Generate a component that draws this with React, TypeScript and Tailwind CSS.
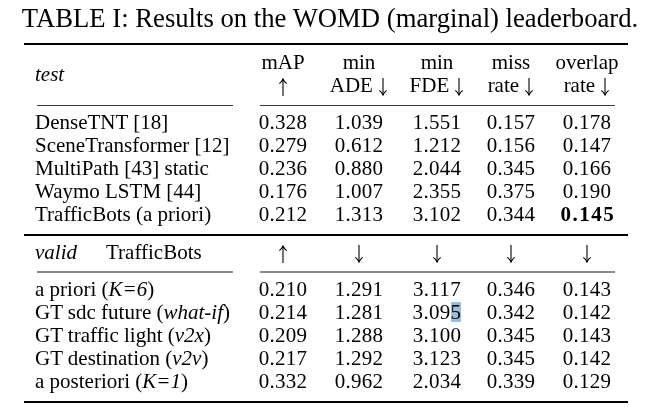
import React from 'react';

type Cell = React.ReactNode;

const cols = 'grid grid-cols-[222px_74px_78px_78px_70px_82px]';

// thin math-style arrows, drawn as svg
const Up = () => (
  <svg width="10" height="18" viewBox="0 0 10 18" className="inline-block align-[-4px]" fill="none" stroke="black" strokeWidth="1.1">
    <path d="M5 1.2 V18" />
    <path d="M1.3 5.6 Q3.8 3.9 5 1 Q6.2 3.9 8.7 5.6" />
  </svg>
);
const Down = () => (
  <svg width="10" height="18" viewBox="0 0 10 18" className="inline-block align-[-4px]" fill="none" stroke="black" strokeWidth="1.1">
    <path d="M5 0 V16.8" />
    <path d="M1.3 12.4 Q3.8 14.1 5 17 Q6.2 14.1 8.7 12.4" />
  </svg>
);

const testRows: Cell[][] = [
  ['DenseTNT [18]', '0.328', '1.039', '1.551', '0.157', '0.178'],
  ['SceneTransformer [12]', '0.279', '0.612', '1.212', '0.156', '0.147'],
  ['MultiPath [43] static', '0.236', '0.880', '2.044', '0.345', '0.166'],
  ['Waymo LSTM [44]', '0.176', '1.007', '2.355', '0.375', '0.190'],
  ['TrafficBots (a priori)', '0.212', '1.313', '3.102', '0.344', <b key="b" className="tracking-[1.5px] pl-[1.5px]">0.145</b>],
];

const validRows: Cell[][] = [
  [<>a priori (<i>K=6</i>)</>, '0.210', '1.291', '3.117', '0.346', '0.143'],
  [
    <>GT sdc future (<i>what-if</i>)</>,
    '0.214',
    '1.281',
    <>
      3.09
      <span className="relative">
        5
        <span className="absolute left-0 right-0 top-[2px] h-[20px] bg-[#9cbfdb] mix-blend-multiply" />
      </span>
    </>,
    '0.342',
    '0.142',
  ],
  [<>GT traffic light (<i>v2x</i>)</>, '0.209', '1.288', '3.100', '0.345', '0.143'],
  [<>GT destination (<i>v2v</i>)</>, '0.217', '1.292', '3.123', '0.345', '0.142'],
  [<>a posteriori (<i>K=1</i>)</>, '0.332', '0.962', '2.034', '0.339', '0.129'],
];

const Row: React.FC<{ cells: Cell[] }> = ({ cells }) => (
  <div className={`${cols} h-[23px] leading-[23px]`}>
    <div className="pl-[11px] whitespace-nowrap">{cells[0]}</div>
    {cells.slice(1).map((c, i) => (
      <div key={i} className="text-center whitespace-nowrap tracking-[0.3px]">
        {c}
      </div>
    ))}
  </div>
);

const CmidRule: React.FC<{ className: string }> = ({ className }) => (
  <div className={cols}>
    <div className={`mx-[13px] ${className}`} />
    <div className={`col-span-5 ml-[14px] mr-[13px] ${className}`} />
  </div>
);

export default function App() {
  return (
    <div className="w-[656px] h-[415px] bg-white text-black font-['Liberation_Serif',serif] overflow-hidden">
      <div className="h-[43px] pt-[3px] pl-[4px] text-center text-[26.7px] leading-[30px] whitespace-nowrap">
        TABLE I: Results on the WOMD (marginal) leaderboard.
      </div>

      <div className="ml-[24px] w-[604px] text-[21px]">
        <div className="h-[2px] bg-black" />

        <div className={`${cols} grid-rows-[23px_23px] leading-[23px] mt-[6px]`}>
          <div className="row-span-2 pl-[11px] flex items-center">
            <i>test</i>
          </div>
          <div className="text-center">mAP</div>
          <div className="text-center">min</div>
          <div className="text-center">min</div>
          <div className="text-center">miss</div>
          <div className="text-center">overlap</div>
          <div className="text-center"><Up /></div>
          <div className="text-center whitespace-nowrap">ADE <Down /></div>
          <div className="text-center whitespace-nowrap">FDE <Down /></div>
          <div className="text-center whitespace-nowrap">rate <Down /></div>
          <div className="text-center whitespace-nowrap">rate <Down /></div>
        </div>

        <div className="mt-[8px]">
          <CmidRule className="h-[1px] bg-[#3a3a3a]" />
        </div>

        <div className="mt-[5px]">
          {testRows.map((r, i) => (
            <Row key={i} cells={r} />
          ))}
        </div>

        <div className="mt-[8px] h-[1.5px] bg-black" />

        <div className="mt-[5px]">
          <div className={`${cols} h-[23px] leading-[23px]`}>
            <div className="pl-[11px] flex gap-[29px] whitespace-nowrap">
              <i>valid</i>
              <span>TrafficBots</span>
            </div>
            <div className="text-center"><Up /></div>
            <div className="text-center"><Down /></div>
            <div className="text-center"><Down /></div>
            <div className="text-center"><Down /></div>
            <div className="text-center"><Down /></div>
          </div>
        </div>

        <div className="mt-[7px]">
          <CmidRule className="h-[2px] bg-[#8a8a8a]" />
        </div>

        <div className="mt-[5px]">
          {validRows.map((r, i) => (
            <Row key={i} cells={r} />
          ))}
        </div>

        <div className="mt-[8px] h-[2px] bg-black" />
      </div>
    </div>
  );
}
